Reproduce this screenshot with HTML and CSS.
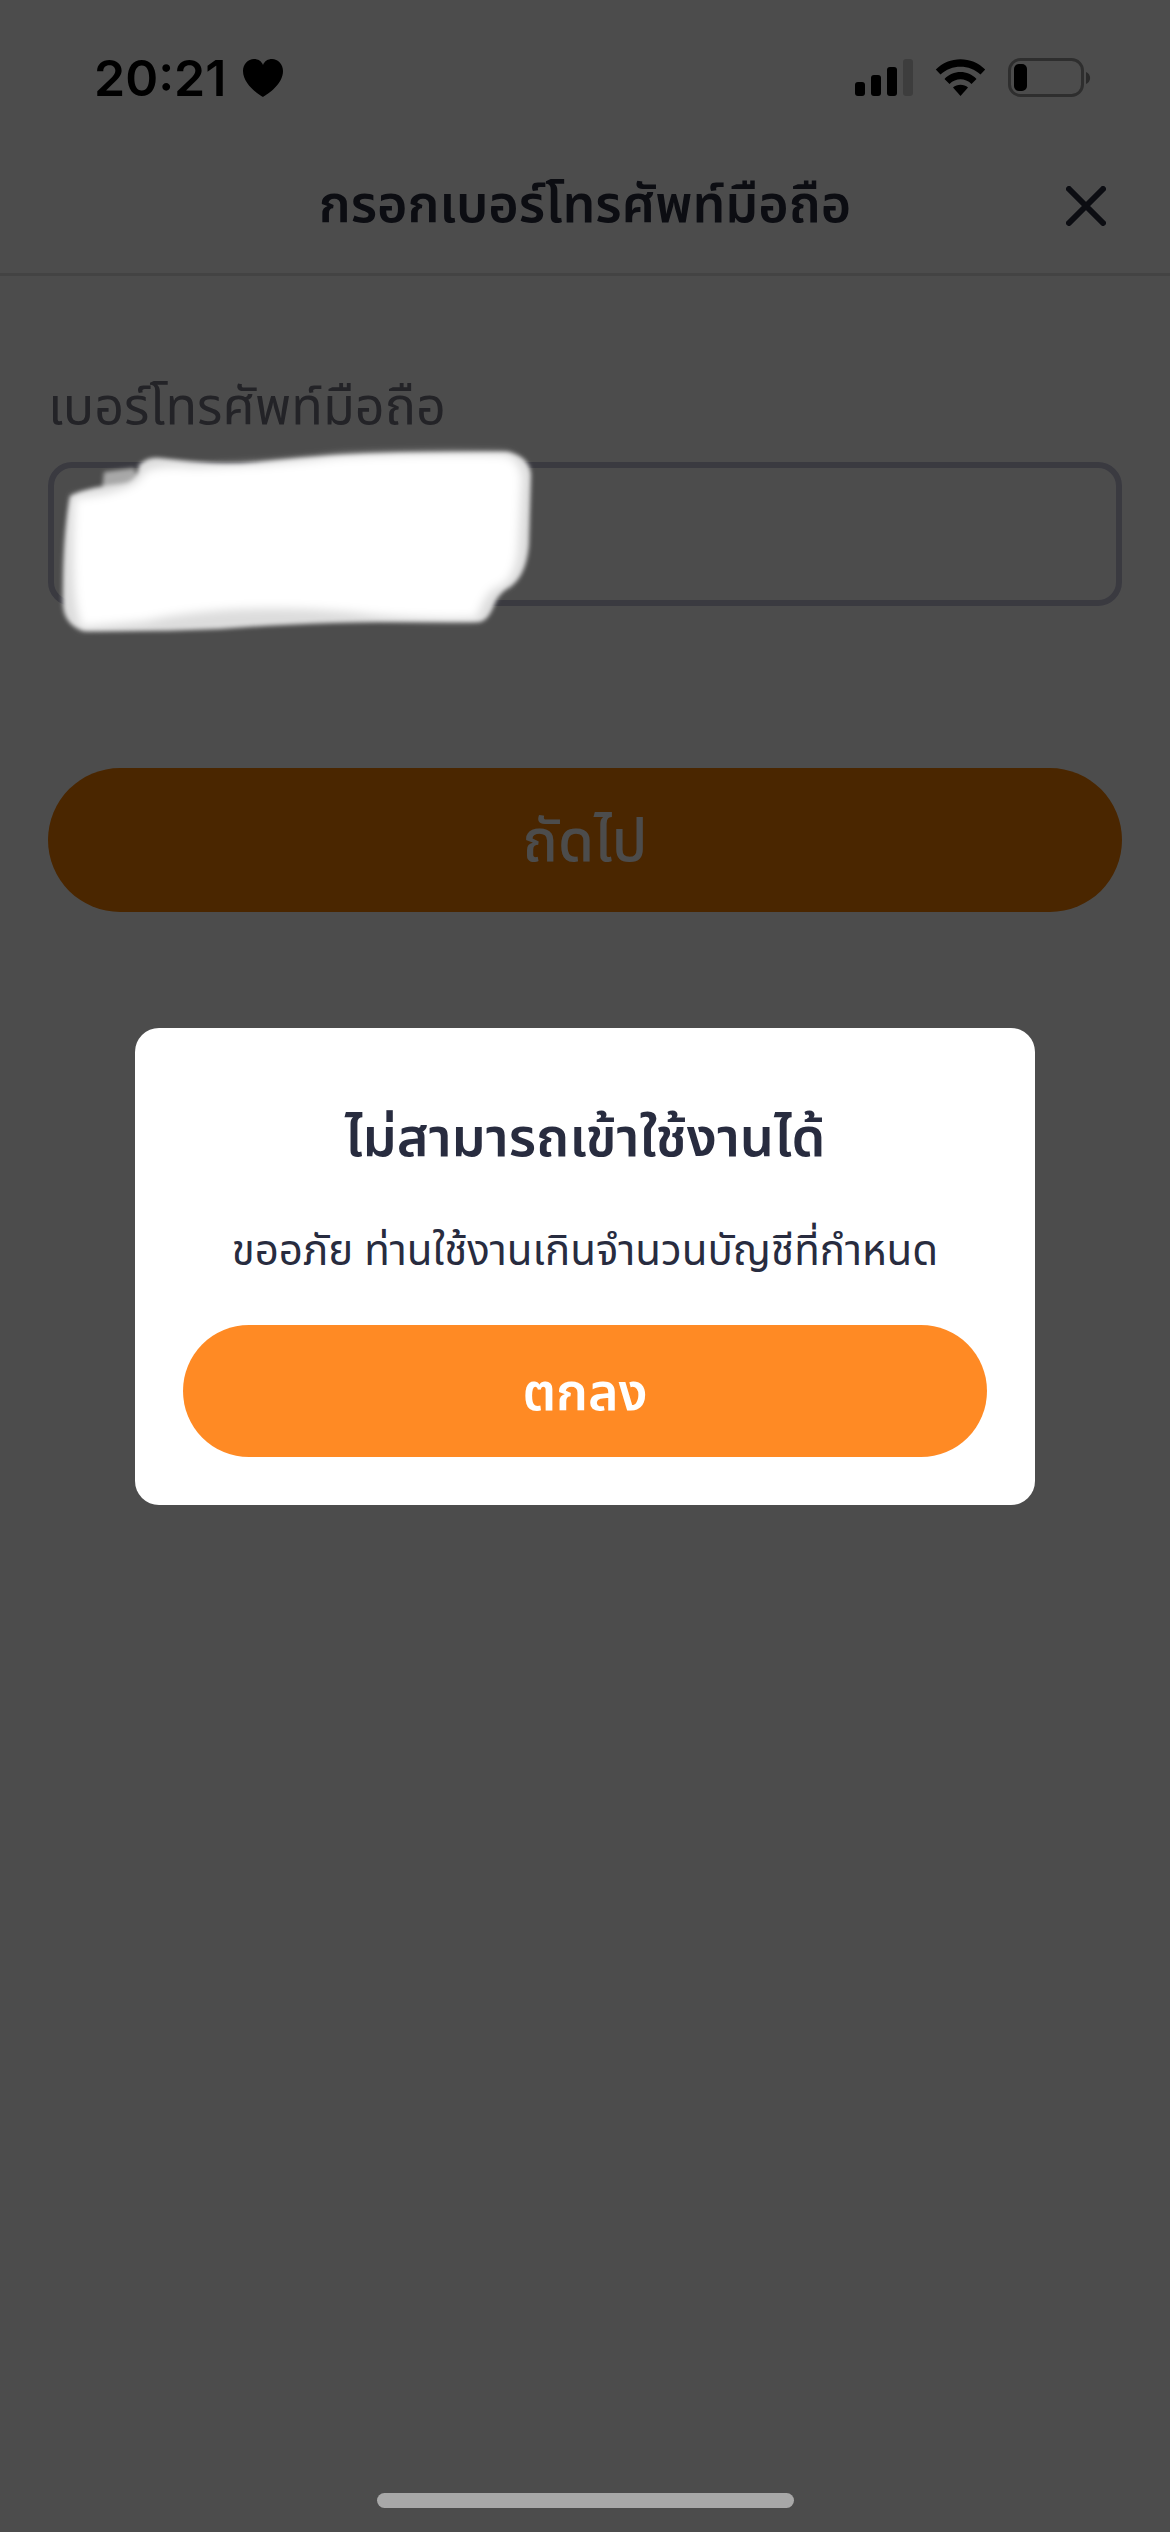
FILE: index.html
```html
<!DOCTYPE html>
<html lang="th">
<head>
<meta charset="utf-8">
<meta name="viewport" content="width=device-width, initial-scale=1">
<title>กรอกเบอร์โทรศัพท์มือถือ</title>
<link rel="stylesheet" href="styles.css">
</head>
<body>
<div class="screen">
  <div class="status">
    <div class="status-left">
      <span class="time">20:21</span>
      <svg class="heart" width="42" height="38" viewBox="0 0 42 38" aria-hidden="true"><path d="M21 38C16 35 1 25 1 12C1 5 6 0 12 0C16 0 19.500 2 21 6C22.500 2 26 0 30 0C36 0 41 5 41 12C41 25 26 35 21 38Z"/></svg>
    </div>
    <div class="status-right">
      <svg width="58" height="38" viewBox="0 0 58 38" aria-hidden="true"><rect x="0" y="23" width="10" height="14" rx="3"/><rect x="16" y="16" width="10" height="21" rx="3"/><rect x="32" y="8" width="10" height="29" rx="3"/><rect x="48" y="0" width="10" height="37" rx="3" opacity=".2"/></svg>
      <svg width="51" height="38" viewBox="0 0 51 38" aria-hidden="true"><path d="M.8 10.500C14 -3.300 37 -3.300 50.200 10.500L45.500 15.500C34.500 5 16.500 5 5.500 15.500Z"/><path d="M9.500 20C18 10.800 33 10.800 41.500 20L36.500 25C30 18.800 21 18.800 14.500 25Z"/><path d="M18 28.500C22 24.700 29 24.700 33 28.500L25.500 37Z"/></svg>
      <svg width="84" height="40" viewBox="0 0 84 40" aria-hidden="true"><rect x="1.500" y="1.500" width="73" height="36" rx="11" fill="none" stroke="#000" stroke-width="3" opacity=".4"/><path d="M78 14C83.500 16 83.500 24 78 26Z" opacity=".45"/><rect x="6" y="6" width="13" height="27" rx="5"/></svg>
    </div>
  </div>
  <header class="header">
    <h1 class="title">กรอกเบอร์โทรศัพท์มือถือ</h1>
    <button class="close" type="button" aria-label="ปิด"><svg width="40" height="40" viewBox="0 0 40 40" aria-hidden="true"><path d="M3 3L37 37M37 3L3 37"/></svg></button>
  </header>
  <form class="form">
    <label class="label" for="phone">เบอร์โทรศัพท์มือถือ</label>
    <div class="field">
      <input class="input" id="phone" type="tel">
      <svg class="mask" width="520" height="204" viewBox="48 440 520 204" aria-hidden="true">
        <defs>
          <filter id="edge" x="-5%" y="-10%" width="110%" height="120%"><feGaussianBlur stdDeviation="2"/></filter>
          <filter id="core" x="-5%" y="-10%" width="110%" height="120%"><feGaussianBlur stdDeviation="5"/></filter>
        </defs>
        <g filter="url(#edge)">
          <path fill="#a8a8a8" d="M104 472L134 468L140 485L102 490Z"/>
          <path fill="#dcdcdc" d="M139 465Q148 456 160 458Q230 467 260 462Q330 454 400 453L508 452Q530 457 531 475L529 545Q526 580 505 590Q497 596 493 608Q488 620 480 622Q330 620 220 629Q150 632 84 631Q64 625 63 605Q62 540 70 496Q90 486 125 484Q138 482 139 465Z"/>
        </g>
        <path filter="url(#core)" fill="#fff" d="M144 472Q160 464 195 468Q270 466 340 457Q430 453 505 455Q520 460 522 478L518 550Q514 584 495 588Q484 595 477 618Q410 620 350 612Q230 602 145 621L82 627Q70 600 75 498Q138 492 144 472Z"/>
      </svg>
    </div>
    <button class="button next" type="button">ถัดไป</button>
  </form>
</div>
<div class="overlay">
  <section class="dialog" role="alertdialog" aria-modal="true" aria-labelledby="dialog-title" aria-describedby="dialog-text">
    <h2 class="dialog-title" id="dialog-title">ไม่สามารถเข้าใช้งานได้</h2>
    <p class="dialog-text" id="dialog-text">ขออภัย ท่านใช้งานเกินจำนวนบัญชีที่กำหนด</p>
    <button class="button confirm" type="button">ตกลง</button>
  </section>
</div>
<div class="home-bar"></div>
</body>
</html>
```
FILE: styles.css
```css
* { box-sizing: border-box; }
body {
  margin: 0;
  min-height: 100vh;
  position: relative;
  background: #fff;
  color: #282c3f;
  font-family: "Noto Sans Thai", "Prompt", "Kanit", "Sarabun", "Umpush", "Inter", sans-serif;
}
h1, h2, p { margin: 0; }
button { border: 0; padding: 0; font-family: inherit; cursor: pointer; }
svg { display: block; }

.status {
  display: flex;
  justify-content: space-between;
  align-items: center;
  height: 156px;
  padding: 0 78px 0 94px;
  color: #000;
}
.status-left { display: flex; align-items: center; gap: 16px; }
.status-right { display: flex; align-items: center; gap: 22px; }
.time { font: 600 50px/60px "Inter", sans-serif; }

.header {
  display: grid;
  grid-template-columns: 72px 1fr 72px;
  align-items: center;
  height: 120px;
  padding: 0 48px 18px;
  border-bottom: 3px solid #e0e0e0;
}
.title {
  grid-column: 2;
  text-align: center;
  font-size: 52px;
  line-height: 72px;
  font-weight: 600;
  white-space: nowrap;
}
.close { background: none; justify-self: end; padding: 16px; }
.close path { fill: none; stroke: #282c3f; stroke-width: 6; stroke-linecap: round; }

.form { display: flex; flex-direction: column; padding: 96px 48px; }
.label { color: #757582; font-size: 52px; line-height: 72px; margin-bottom: 18px; }
.field { position: relative; margin-bottom: 162px; }
.input {
  display: block;
  width: 100%;
  height: 144px;
  padding: 0 36px;
  border: 6px solid #c1c1d8;
  border-radius: 24px;
  background: #fff;
  font: inherit;
  font-size: 52px;
}
.mask { position: absolute; left: 0; top: -22px; z-index: 2; }
.button {
  width: 100%;
  padding-top: 6px;
  border-radius: 72px;
  color: #fff;
  font-size: 52px;
  font-weight: 600;
}
.next { height: 144px; background: #f77f00; font-size: 58px; font-weight: 500; }

.overlay {
  position: absolute;
  inset: 0;
  z-index: 1;
  display: flex;
  align-items: center;
  justify-content: center;
  padding: 0 135px;
  background: rgba(0, 0, 0, .7);
}
.dialog {
  width: 100%;
  max-width: 900px;
  padding: 72px 48px 48px;
  border-radius: 24px;
  background: #fff;
  text-align: center;
}
.dialog-title { font-size: 54px; line-height: 80px; font-weight: 600; margin-bottom: 42px; }
.dialog-text { font-size: 42px; line-height: 60px; margin-bottom: 43px; }
.confirm { height: 132px; background: #ff8a24; }

.home-bar {
  position: absolute;
  z-index: 2;
  bottom: 24px;
  left: 50%;
  width: 417px;
  height: 15px;
  margin-left: -208px;
  border-radius: 8px;
  background: #a8a8a8;
}
```
